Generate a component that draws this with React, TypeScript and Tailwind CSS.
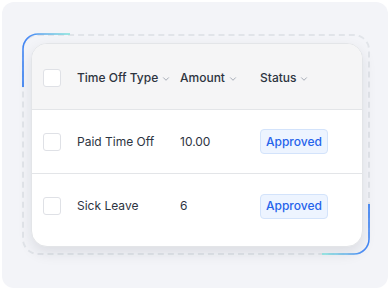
import React from "react";

const Chevron = () => (
  <svg width="8" height="8" viewBox="0 0 8 8" className="ml-[4px] mt-[2px]" fill="none">
    <path d="M1.5 2.75 L4 5.25 L6.5 2.75" stroke="#9ca3af" strokeWidth="0.9" strokeLinecap="round" strokeLinejoin="round" />
  </svg>
);

const Checkbox = () => (
  <div className="w-[18px] h-[18px] rounded-[3px] border-[1.5px] border-[#dfe1e6] bg-white shrink-0" />
);

const Badge = () => (
  <span className="inline-flex items-center h-[25px] px-[5px] rounded-[4px] border border-[#d3e3fb] bg-[#edf4ff] text-[12px] font-medium text-[#2563eb]">
    Approved
  </span>
);

export default function App() {
  return (
    <div className="w-[390px] h-[291px] bg-white p-[2px]" style={{ fontFamily: "Inter, 'Noto Sans', sans-serif" }}>
      <div className="relative w-[386px] h-[286px] rounded-[12px] bg-[#f3f4f8] pl-[20px] pt-[32px]">
        <div className="w-[348px] h-[221px] rounded-[16px] border-2 border-dashed border-[#e1e4e9] p-[7px]">
          <div className="w-[332px] h-[204px] rounded-[16px] bg-white border border-[#e3e5e8] overflow-hidden shadow-[0_6px_14px_rgba(20,30,50,0.10)] text-[12px] text-[#2d343f]">
            <div className="flex items-center h-[66px] bg-[#f5f5f6] border-b border-[#e3e5e8] pl-[11px] font-medium pt-[2px]">
              <Checkbox />
              <div className="flex items-center ml-[16px] w-[103px]">Time Off Type<Chevron /></div>
              <div className="flex items-center w-[80px]">Amount<Chevron /></div>
              <div className="flex items-center">Status<Chevron /></div>
            </div>
            <div className="flex items-center h-[64px] border-b border-[#e3e5e8] pl-[11px]">
              <Checkbox />
              <div className="ml-[16px] w-[103px]">Paid Time Off</div>
              <div className="w-[80px]">10.00</div>
              <Badge />
            </div>
            <div className="flex items-center h-[64px] pl-[11px]">
              <Checkbox />
              <div className="ml-[16px] w-[103px]">Sick Leave</div>
              <div className="w-[80px]">6</div>
              <Badge />
            </div>
          </div>
        </div>
        <svg className="absolute left-[18px] top-[30px]" width="60" height="60" viewBox="0 0 60 60" fill="none">
          <defs>
            <linearGradient id="g1" x1="0" y1="1" x2="1" y2="0">
              <stop offset="0" stopColor="#1d6ff2" />
              <stop offset="0.55" stopColor="#4d8df5" />
              <stop offset="1" stopColor="#7fe3dc" />
            </linearGradient>
          </defs>
          <path d="M3 55 L3 17 A15 15 0 0 1 18 2 L50 2" stroke="url(#g1)" strokeWidth="1.5" />
        </svg>
        <svg className="absolute left-[316px] top-[200px]" width="60" height="60" viewBox="0 0 60 60" fill="none">
          <defs>
            <linearGradient id="g2" x1="1" y1="0" x2="0" y2="1">
              <stop offset="0" stopColor="#1d6ff2" />
              <stop offset="0.55" stopColor="#4d8df5" />
              <stop offset="1" stopColor="#7fe3dc" />
            </linearGradient>
          </defs>
          <path d="M51 2 L51 37 A15 15 0 0 1 36 52 L4 52" stroke="url(#g2)" strokeWidth="1.5" />
        </svg>
      </div>
    </div>
  );
}
